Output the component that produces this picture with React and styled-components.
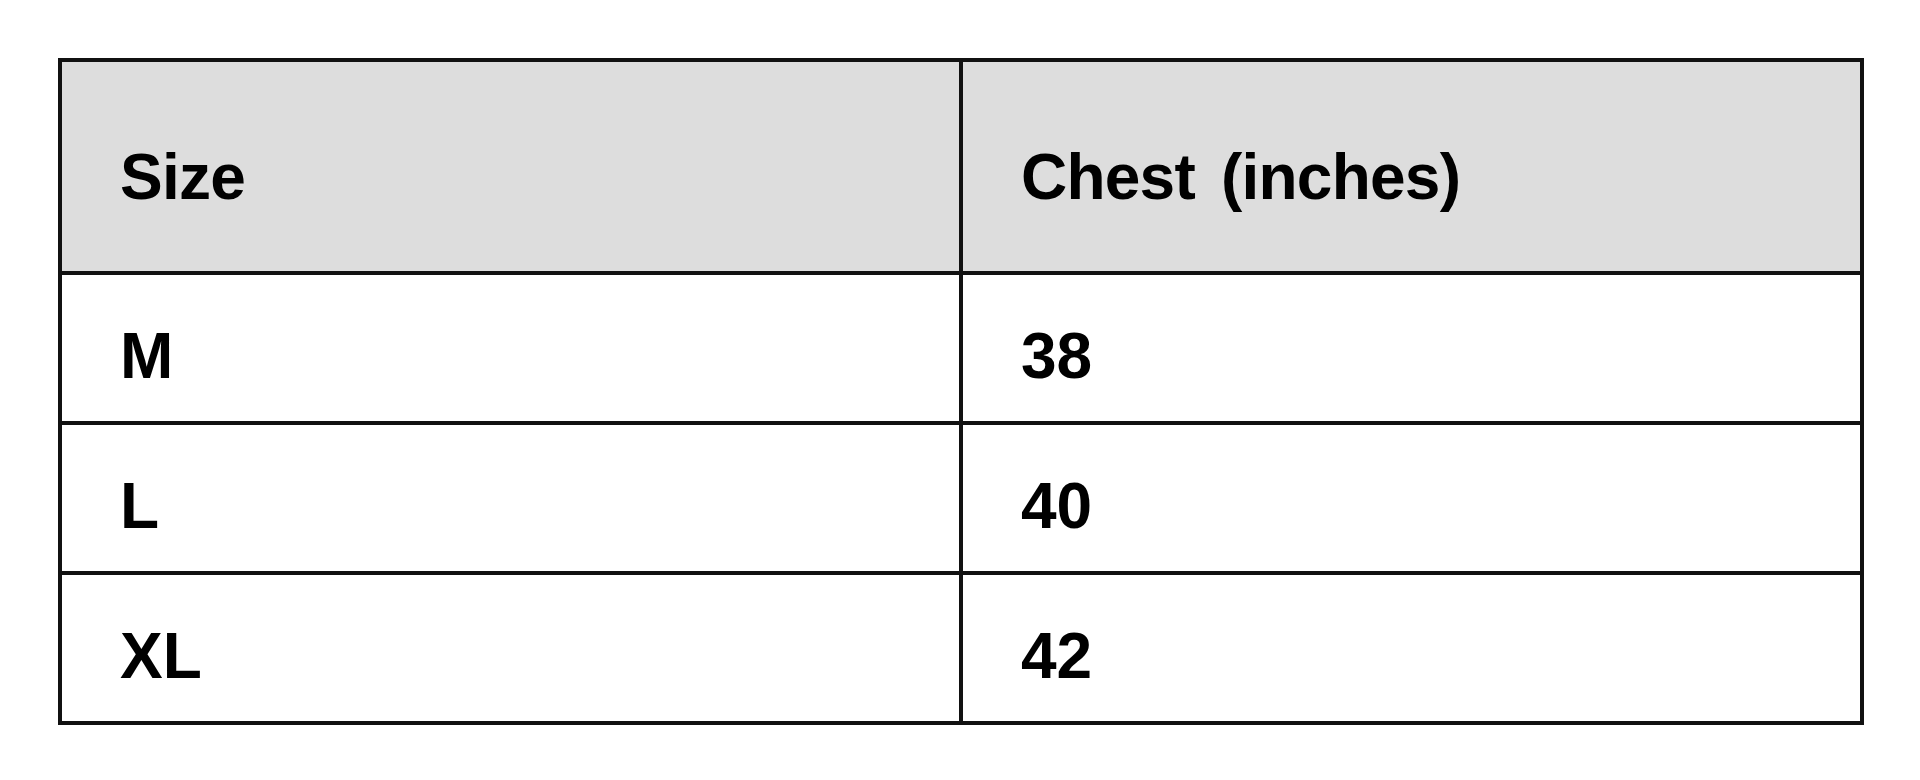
import React from 'react';
import styled, { createGlobalStyle } from 'styled-components';

const GlobalStyle = createGlobalStyle`
  html, body {
    margin: 0;
    padding: 0;
    background: #ffffff;
  }
  body {
    font-family: "Liberation Sans", Arial, Helvetica, sans-serif;
    color: #000;
  }
`;

const Page = styled.div`
  width: 1920px;
  height: 780px;
  box-sizing: border-box;
  padding: 58px 56px 0 58px;
`;

const Table = styled.table`
  width: 100%;
  border-collapse: collapse;
  table-layout: fixed;
  border: 4px solid #111;
`;

const HeadCell = styled.th`
  height: 213px;
  background: #dddddd;
  border: 4px solid #111;
  padding: 20px 0 0 58px;
  text-align: left;
  vertical-align: middle;
  font-size: 64px;
  font-weight: 700;
  letter-spacing: -0.012em;
  word-spacing: 0.14em;
  box-sizing: border-box;
`;

const Cell = styled.td`
  height: 150px;
  border: 4px solid #111;
  padding: 16px 0 0 58px;
  vertical-align: middle;
  font-size: 64px;
  font-weight: 700;
  box-sizing: border-box;
`;

const sizes = [
  { size: 'M', chest: 38 },
  { size: 'L', chest: 40 },
  { size: 'XL', chest: 42 },
];

const App = () => {
  return (
    <>
      <GlobalStyle />
      <Page>
        <Table>
          <thead>
            <tr>
              <HeadCell>Size</HeadCell>
              <HeadCell>Chest (inches)</HeadCell>
            </tr>
          </thead>
          <tbody>
            {sizes.map(row => (
              <tr key={row.size}>
                <Cell>{row.size}</Cell>
                <Cell>{row.chest}</Cell>
              </tr>
            ))}
          </tbody>
        </Table>
      </Page>
    </>
  );
};

export default App;
